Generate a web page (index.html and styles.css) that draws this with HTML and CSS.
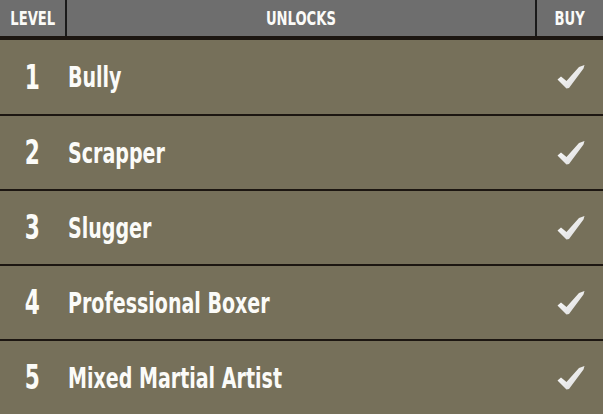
FILE: index.html
```html
<!DOCTYPE html>
<html>
<head>
<meta charset="utf-8">
<link rel="stylesheet" href="styles.css">
</head>
<body>
<div class="table">
  <div class="head">
    <div class="hcell level"><span class="cond">LEVEL</span></div>
    <div class="hcell unlocks"><span class="cond">UNLOCKS</span></div>
    <div class="hcell buy"><span class="cond">BUY</span></div>
  </div>
  <div class="row first">
    <div class="num"><span class="cond">1</span></div>
    <div class="name"><span class="cond">Bully</span></div>
    <div class="check"><svg viewBox="0 0 28 24" width="28" height="24"><defs><linearGradient id="g" x1="0" y1="0" x2="1" y2="1"><stop offset="0" stop-color="#ffffff"/><stop offset="1" stop-color="#d8d8d8"/></linearGradient></defs><path d="M0.5 14.5 L4 11.5 L9.5 16 L22 2 L27.5 0 L26.5 3.5 L12 23 L9.5 23.5 Z" fill="url(#g)"/></svg></div>
  </div>
  <div class="row">
    <div class="num"><span class="cond">2</span></div>
    <div class="name"><span class="cond">Scrapper</span></div>
    <div class="check"><svg viewBox="0 0 28 24" width="28" height="24"><path d="M0.5 14.5 L4 11.5 L9.5 16 L22 2 L27.5 0 L26.5 3.5 L12 23 L9.5 23.5 Z" fill="url(#g)"/></svg></div>
  </div>
  <div class="row">
    <div class="num"><span class="cond">3</span></div>
    <div class="name"><span class="cond">Slugger</span></div>
    <div class="check"><svg viewBox="0 0 28 24" width="28" height="24"><path d="M0.5 14.5 L4 11.5 L9.5 16 L22 2 L27.5 0 L26.5 3.5 L12 23 L9.5 23.5 Z" fill="url(#g)"/></svg></div>
  </div>
  <div class="row">
    <div class="num"><span class="cond">4</span></div>
    <div class="name"><span class="cond">Professional Boxer</span></div>
    <div class="check"><svg viewBox="0 0 28 24" width="28" height="24"><path d="M0.5 14.5 L4 11.5 L9.5 16 L22 2 L27.5 0 L26.5 3.5 L12 23 L9.5 23.5 Z" fill="url(#g)"/></svg></div>
  </div>
  <div class="row">
    <div class="num"><span class="cond">5</span></div>
    <div class="name"><span class="cond">Mixed Martial Artist</span></div>
    <div class="check"><svg viewBox="0 0 28 24" width="28" height="24"><path d="M0.5 14.5 L4 11.5 L9.5 16 L22 2 L27.5 0 L26.5 3.5 L12 23 L9.5 23.5 Z" fill="url(#g)"/></svg></div>
  </div>
</div>
</body>
</html>
```
FILE: styles.css
```css
html, body {
  margin: 0;
  padding: 0;
  background: #76705a;
}
body {
  width: 603px;
  height: 414px;
  overflow: hidden;
  font-family: "DejaVu Sans Condensed", "DejaVu Sans", sans-serif;
  font-weight: bold;
  color: #fbfbf8;
}
.table {
  display: flex;
  flex-direction: column;
}
.cond {
  display: inline-block;
  transform: scaleX(0.73);
  transform-origin: center center;
  white-space: nowrap;
}
.head {
  display: grid;
  grid-template-columns: 65px 1fr 66px;
  height: 36px;
  background: #6e6e6e;
  border-bottom: 4px solid #1c1611;
}
.hcell {
  display: flex;
  align-items: center;
  justify-content: center;
  font-size: 20px;
}
.unlocks {
  border-left: 2px solid #1a1a1a;
  border-right: 2px solid #1a1a1a;
}
.row {
  display: grid;
  grid-template-columns: 65px 1fr 66px;
  align-items: center;
  height: 73px;
  background: #76705a;
  border-top: 2px solid #1c1611;
}
.row.first {
  height: 74px;
  border-top: none;
}
.num {
  text-align: center;
  font-size: 33px;
}
.name {
  padding-left: 3px;
  font-size: 29px;
}
.name .cond {
  transform-origin: left center;
}
.check {
  display: flex;
  justify-content: center;
  padding-left: 2px;
}
.check svg {
  display: block;
}
```
